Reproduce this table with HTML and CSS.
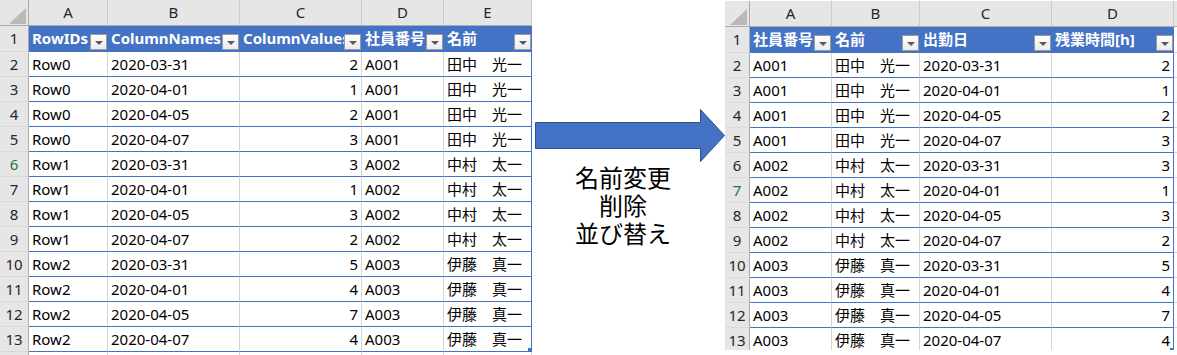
FILE: index.html
```html
<!DOCTYPE html>
<html lang="ja">
<head>
<meta charset="utf-8">
<title>名前変更・削除・並び替え</title>
<link rel="stylesheet" href="styles.css">
</head>
<body>
<div class="page">
  <div class="sheet sheet-l">
    <div class="corner"><svg class="tri" width="17" height="16" viewBox="0 0 17 16"><polygon points="17,0 17,16 0,16" fill="#b9b9b9"/></svg></div>
    <div class="ch">A</div><div class="ch">B</div><div class="ch">C</div><div class="ch">D</div><div class="ch">E</div>

    <div class="rh">1</div>
    <div class="c h">RowIDs<span class="dd"></span></div>
    <div class="c h">ColumnNames<span class="dd"></span></div>
    <div class="c h">ColumnValues<span class="dd"></span></div>
    <div class="c h">社員番号<span class="dd"></span></div>
    <div class="c h last">名前<span class="dd"></span></div>

    <div class="rh">2</div><div class="c">Row0</div><div class="c">2020-03-31</div><div class="c r">2</div><div class="c">A001</div><div class="c last">田中　光一</div>
    <div class="rh">3</div><div class="c">Row0</div><div class="c">2020-04-01</div><div class="c r">1</div><div class="c">A001</div><div class="c last">田中　光一</div>
    <div class="rh">4</div><div class="c">Row0</div><div class="c">2020-04-05</div><div class="c r">2</div><div class="c">A001</div><div class="c last">田中　光一</div>
    <div class="rh">5</div><div class="c">Row0</div><div class="c">2020-04-07</div><div class="c r">3</div><div class="c">A001</div><div class="c last">田中　光一</div>
    <div class="rh act">6</div><div class="c">Row1</div><div class="c">2020-03-31</div><div class="c r">3</div><div class="c">A002</div><div class="c last">中村　太一</div>
    <div class="rh">7</div><div class="c">Row1</div><div class="c">2020-04-01</div><div class="c r">1</div><div class="c">A002</div><div class="c last">中村　太一</div>
    <div class="rh">8</div><div class="c">Row1</div><div class="c">2020-04-05</div><div class="c r">3</div><div class="c">A002</div><div class="c last">中村　太一</div>
    <div class="rh">9</div><div class="c">Row1</div><div class="c">2020-04-07</div><div class="c r">2</div><div class="c">A002</div><div class="c last">中村　太一</div>
    <div class="rh">10</div><div class="c">Row2</div><div class="c">2020-03-31</div><div class="c r">5</div><div class="c">A003</div><div class="c last">伊藤　真一</div>
    <div class="rh">11</div><div class="c">Row2</div><div class="c">2020-04-01</div><div class="c r">4</div><div class="c">A003</div><div class="c last">伊藤　真一</div>
    <div class="rh">12</div><div class="c">Row2</div><div class="c">2020-04-05</div><div class="c r">7</div><div class="c">A003</div><div class="c last">伊藤　真一</div>
    <div class="rh">13</div><div class="c">Row2</div><div class="c">2020-04-07</div><div class="c r">4</div><div class="c">A003</div><div class="c last">伊藤　真一<span class="rs"></span></div>
    <div class="rh"></div><div class="c x"></div><div class="c x"></div><div class="c x"></div><div class="c x"></div><div class="c x"></div>
  </div>

  <div class="mid">
    <svg class="arrow" width="190" height="54" viewBox="0 0 190 54">
      <polygon points="0.5,13.5 165.5,13.5 165.5,0.5 189.5,26.5 165.5,52.5 165.5,39.5 0.5,39.5" fill="#4472c4" stroke="#2f528f" stroke-width="1"/>
    </svg>
    <div class="note">
      <div>名前変更</div>
      <div>削除</div>
      <div>並び替え</div>
    </div>
  </div>

  <div class="sheet sheet-r">
    <div class="corner"><svg class="tri" width="17" height="16" viewBox="0 0 17 16"><polygon points="17,0 17,16 0,16" fill="#b9b9b9"/></svg></div>
    <div class="ch">A</div><div class="ch">B</div><div class="ch">C</div><div class="ch">D</div><div class="ch stub"></div>

    <div class="rh">1</div>
    <div class="c h">社員番号<span class="dd"></span></div>
    <div class="c h">名前<span class="dd"></span></div>
    <div class="c h">出勤日<span class="dd"></span></div>
    <div class="c h last">残業時間[h]<span class="dd"></span></div>
    <div class="c x"></div>

    <div class="rh">2</div><div class="c">A001</div><div class="c">田中　光一</div><div class="c">2020-03-31</div><div class="c r last">2</div><div class="c x"></div>
    <div class="rh">3</div><div class="c">A001</div><div class="c">田中　光一</div><div class="c">2020-04-01</div><div class="c r last">1</div><div class="c x"></div>
    <div class="rh">4</div><div class="c">A001</div><div class="c">田中　光一</div><div class="c">2020-04-05</div><div class="c r last">2</div><div class="c x"></div>
    <div class="rh">5</div><div class="c">A001</div><div class="c">田中　光一</div><div class="c">2020-04-07</div><div class="c r last">3</div><div class="c x"></div>
    <div class="rh">6</div><div class="c">A002</div><div class="c">中村　太一</div><div class="c">2020-03-31</div><div class="c r last">3</div><div class="c x"></div>
    <div class="rh act">7</div><div class="c">A002</div><div class="c">中村　太一</div><div class="c">2020-04-01</div><div class="c r last">1</div><div class="c x"></div>
    <div class="rh">8</div><div class="c">A002</div><div class="c">中村　太一</div><div class="c">2020-04-05</div><div class="c r last">3</div><div class="c x"></div>
    <div class="rh">9</div><div class="c">A002</div><div class="c">中村　太一</div><div class="c">2020-04-07</div><div class="c r last">2</div><div class="c x"></div>
    <div class="rh">10</div><div class="c">A003</div><div class="c">伊藤　真一</div><div class="c">2020-03-31</div><div class="c r last">5</div><div class="c x"></div>
    <div class="rh">11</div><div class="c">A003</div><div class="c">伊藤　真一</div><div class="c">2020-04-01</div><div class="c r last">4</div><div class="c x"></div>
    <div class="rh">12</div><div class="c">A003</div><div class="c">伊藤　真一</div><div class="c">2020-04-05</div><div class="c r last">7</div><div class="c x"></div>
    <div class="rh">13</div><div class="c">A003</div><div class="c">伊藤　真一</div><div class="c">2020-04-07</div><div class="c r last">4<span class="rs rs-up"></span></div><div class="c x"></div>
  </div>
</div>
</body>
</html>
```
FILE: styles.css
```css
* { box-sizing: border-box; }

body {
  margin: 0;
  width: 1177px;
  height: 355px;
  overflow: hidden;
  background: #ffffff;
  font-family: "Noto Sans", "Noto Sans CJK JP", sans-serif;
  font-size: 15px;
  color: #000000;
}

.page {
  display: flex;
  align-items: flex-start;
}

.sheet {
  display: grid;
  grid-auto-rows: 25px;
  overflow: hidden;
  flex: none;
}

.sheet-l {
  width: 532px;
  height: 355px;
  grid-template-columns: 29px 79px 132px 122px 82px 88px;
  grid-template-rows: 26px 26px;
}

.sheet-r {
  width: 452px;
  height: 349px;
  margin-top: 1px;
  grid-template-columns: 25px 82px 88px 132px 122px 3px;
  grid-template-rows: 26px 26px;
}

.corner {
  background: #e6e6e6;
  border-right: 1px solid #ababab;
  border-bottom: 1px solid #ababab;
  display: flex;
  justify-content: flex-end;
  align-items: flex-end;
  padding: 0 2px 1px 0;
}

.tri { display: block; }

.ch {
  background: #e6e6e6;
  border-right: 1px solid #cacaca;
  border-bottom: 1px solid #ababab;
  text-align: center;
  line-height: 25px;
  color: #262626;
}

.ch.stub { border-right: none; }

.rh {
  background: #e6e6e6;
  border-right: 1px solid #ababab;
  border-bottom: 1px solid #d9d9d9;
  text-align: center;
  line-height: 24px;
  color: #262626;
}

.rh.act {
  color: #217346;
}

.c {
  position: relative;
  border-right: 1px solid #d4d4d4;
  border-bottom: 1px solid #4472c4;
  padding: 0 3px;
  line-height: 24px;
  white-space: nowrap;
  overflow: hidden;
}

.c.r { text-align: right; }
.c.last { border-right-color: #4472c4; }
.c.x { border-bottom-color: #d4d4d4; border-right-color: #d4d4d4; }
.sheet-r .c.x { border-right: none; }

.c.h {
  background: #4472c4;
  color: #ffffff;
  font-weight: 700;
  line-height: 25px;
  border-right-color: #4472c4;
}

.dd {
  position: absolute;
  right: 0;
  bottom: 1px;
  width: 17px;
  height: 16px;
  background: linear-gradient(#ffffff, #ebebeb);
  border: 1px solid #9a9a9a;
  display: flex;
  align-items: center;
  justify-content: center;
  padding-top: 2px;
}

.dd::after {
  content: "";
  width: 0;
  height: 0;
  border-left: 4px solid transparent;
  border-right: 4px solid transparent;
  border-top: 4px solid #595959;
}

.rs {
  position: absolute;
  right: 0;
  bottom: 0;
  width: 3px;
  height: 3px;
  background: #4472c4;
}

.rs-up { bottom: 1px; }

.mid {
  width: 193px;
  flex: none;
  display: flex;
  flex-direction: column;
  align-items: flex-end;
  padding-top: 109px;
}

.arrow { display: block; }

.note {
  align-self: stretch;
  margin-top: 2px;
  padding-right: 11px;
  text-align: center;
  font-family: "Liberation Sans", "Noto Sans CJK JP", sans-serif;
  font-size: 24px;
  line-height: 28px;
  color: #000000;
}
```
